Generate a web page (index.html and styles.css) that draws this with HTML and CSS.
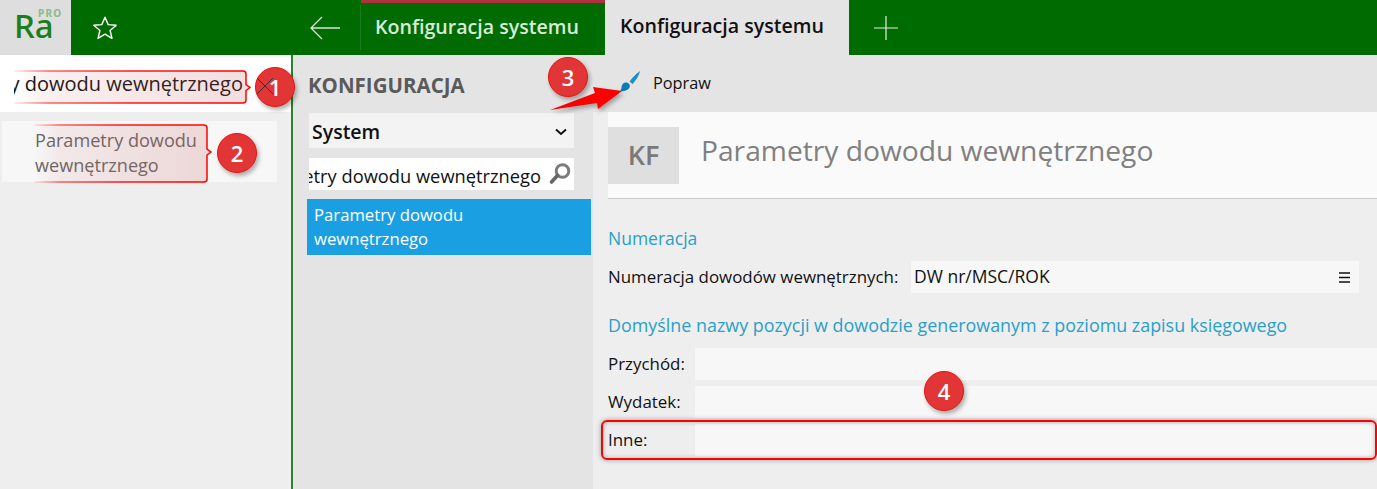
FILE: index.html
```html
<!DOCTYPE html>
<html lang="pl">
<head>
<meta charset="utf-8">
<title>Konfiguracja systemu</title>
<link rel="stylesheet" href="styles.css">
</head>
<body>
<header class="top">
  <div class="logo"><span class="logo-ra">Ra</span><span class="logo-pro">PRO</span></div>
  <div class="star-cell">
    <svg width="26" height="26" viewBox="0 0 26 26"><path d="M13 2.200l3.200 7.400 8 .7-6.100 5.200 1.900 7.800L13 19.100 6 23.300l1.900-7.800L1.800 10.300l8-.7z" fill="none" stroke="#fff" stroke-width="1.400" stroke-linejoin="round"/></svg>
  </div>
  <div class="back-cell">
    <svg width="32" height="26" viewBox="0 0 32 26"><path d="M31 13H2M13 2L2 13l11 11" fill="none" stroke="#d5e6d5" stroke-width="1.300"/></svg>
  </div>
  <div class="tab tab-inactive">Konfiguracja systemu</div>
  <div class="tab tab-active">Konfiguracja systemu</div>
  <div class="plus-cell">
    <svg width="26" height="26" viewBox="0 0 26 26"><path d="M13 1v24M1 13h24" stroke="#e4efe4" stroke-width="1.200"/></svg>
  </div>
</header>
<div class="main">
  <aside class="side">
    <div class="side-search"><div class="side-search-text"><span class="clip-text">Parametry dowodu wewnętrznego</span></div></div>
    <div class="side-item">Parametry dowodu<br>wewnętrznego</div>
  </aside>
  <nav class="mid">
    <h2 class="mid-title">KONFIGURACJA</h2>
    <div class="select"><span>System</span>
      <svg width="12" height="8" viewBox="0 0 12 8"><path d="M1 1.500l5 4.500 5-4.500" fill="none" stroke="#111" stroke-width="2"/></svg>
    </div>
    <div class="mid-search">
      <div class="mid-search-text"><span class="clip-text">Parametry dowodu wewnętrznego</span></div>
      <svg width="24" height="24" viewBox="0 0 24 24"><circle cx="14.500" cy="9" r="6.300" fill="none" stroke="#7b7b7b" stroke-width="3"/><path d="M9.500 13.500L3.500 20" stroke="#666" stroke-width="3.600" stroke-linecap="round"/></svg>
    </div>
    <div class="mid-item">Parametry dowodu<br>wewnętrznego</div>
  </nav>
  <section class="content">
    <div class="toolbar">
      <svg class="brush" width="22" height="24" viewBox="0 0 22 24"><path d="M21 1C18 3 13 8 10.500 11.500L13.500 14C16 11.500 20 6 21 1z" fill="#1a8fc4"/><path d="M8 12.500c-3-.5-5.500 1.500-5.500 5 0 1-.5 2.500-1.500 3.500 3 .5 8 0 9.500-3.500 1-2 .2-4-2.500-5z" fill="#0a7cb0"/></svg>
      <span class="toolbar-label">Popraw</span>
    </div>
    <div class="head">
      <div class="kf">KF</div>
      <h1 class="head-title">Parametry dowodu wewnętrznego</h1>
    </div>
    <div class="form">
      <h3 class="section first">Numeracja</h3>
      <div class="row row-num">
        <label class="lbl-auto">Numeracja dowodów wewnętrznych:</label>
        <div class="field field-num"><span class="field-value">DW nr/MSC/ROK</span>
          <svg width="11" height="11" viewBox="0 0 11 11"><path d="M0 1h11M0 5.500h11M0 10h11" stroke="#111" stroke-width="1.400"/></svg>
        </div>
      </div>
      <h3 class="section second">Domyślne nazwy pozycji w dowodzie generowanym z poziomu zapisu księgowego</h3>
      <div class="row"><label class="lbl">Przychód:</label><div class="field"></div></div>
      <div class="row"><label class="lbl">Wydatek:</label><div class="field"></div></div>
      <div class="row"><label class="lbl">Inne:</label><div class="field"></div></div>
    </div>
  </section>
</div>

<svg class="callout callout-1" width="240" height="38" viewBox="0 0 240 38">
  <defs>
    <linearGradient id="cf1" x1="0" x2="1" y1="0" y2="0"><stop offset="0" stop-color="#c86464" stop-opacity="0"/><stop offset=".15" stop-color="#c86464" stop-opacity=".1"/><stop offset="1" stop-color="#c86464" stop-opacity=".22"/></linearGradient>
    <linearGradient id="cs1" x1="0" x2="1" y1="0" y2="0"><stop offset="0" stop-color="#f00" stop-opacity=".08"/><stop offset=".15" stop-color="#f00" stop-opacity=".6"/><stop offset=".5" stop-color="#f00" stop-opacity=".9"/><stop offset="1" stop-color="#f00"/></linearGradient>
  </defs>
  <path d="M1 3H230q3 0 3 3V16.500l4 3-4 3V32q0 3-3 3H1" fill="url(#cf1)" stroke="url(#cs1)" stroke-width="1.500"/>
</svg>
<svg class="callout callout-2" width="185" height="60" viewBox="0 0 185 60">
  <path d="M1 1H171q3 0 3 3V25l4 3-4 3V55q0 3-3 3H1" fill="url(#cf1)" stroke="url(#cs1)" stroke-width="1.500"/>
</svg>
<svg class="callout arrow" width="75" height="36" viewBox="0 0 75 36">
  <path d="M1 30L46 13 44 7 73 11 49 29 48 23z" fill="#f00"/>
</svg>
<div class="callout outline"></div>
<div class="callout badge badge-1">1</div>
<div class="callout badge badge-2">2</div>
<div class="callout badge badge-3">3</div>
<div class="callout badge badge-4">4</div>
<svg class="callout closex" width="18" height="18" viewBox="0 0 18 18"><path d="M1 1l16 16M17 1L1 17" stroke="#333" stroke-width="1"/></svg>
</body>
</html>
```
FILE: styles.css
```css
* { box-sizing: border-box; }
html, body { margin: 0; height: 489px; overflow: hidden; }
body { position: relative; font-family: "Open Sans", "Noto Sans", sans-serif; color: #111; background: #eee; font-size: 16px; }

.top { display: flex; height: 55px; background: #006b00; }
.logo { position: relative; width: 71px; background: #dedede; }
.logo-ra { position: absolute; left: 14px; top: 2px; font: 500 33px/48px "Noto Sans", sans-serif; color: #1b7f1b; }
.logo-pro { position: absolute; left: 38px; top: 8px; font: 700 10px/11px "Noto Sans", sans-serif; color: #86bc86; letter-spacing: 1.200px; }
.star-cell { width: 70px; display: flex; align-items: center; padding-left: 21px; }
.back-cell { width: 220px; display: flex; align-items: center; justify-content: flex-end; padding-right: 19px; border-right: 1px solid #1c7b1c; margin: 5px 0; }
.tab { width: 244px; display: flex; align-items: center; padding-left: 14px; font-size: 19.600px; font-weight: 600; }
.tab-inactive { color: #d8ecd8; border-top: 3px solid #b03040; padding-bottom: 6px; }
.tab-active { padding: 0 0 4px 15px; background: #e4e4e4; color: #111; }
.plus-cell { display: flex; align-items: center; padding-left: 24px; }

.main { display: flex; height: 434px; }
.side { width: 293px; background: #eee; border-right: 2px solid #2a842a; }
.side-search { height: 57px; padding: 0 48px 0 14px; background: #fff; display: flex; align-items: center; font-size: 20px; }
.side-search-text { flex: 1; min-width: 0; overflow: hidden; display: flex; justify-content: flex-end; }
.clip-text { white-space: nowrap; flex: none; }
.side-item { margin: 9px 14px 0 2px; height: 61px; padding: 7px 0 0 33px; background: #f7f7f7; font-size: 18.100px; line-height: 25px; color: #666; }

.mid { width: 300px; background: #e4e4e4; padding: 0 2px 0 14px; }
.mid-title { margin: 0; height: 58px; padding: 17px 0 0 1px; font-size: 20.500px; line-height: 26px; font-weight: 700; color: #5a5a5a; }
.select { margin-left: 2px; width: 265px; height: 35px; padding: 2px 7px 0 3px; background: #f3f3f3; display: flex; align-items: center; justify-content: space-between; font-size: 19.500px; font-weight: 600; color: #111; }
.mid-search { margin: 10px 0 0 2px; width: 265px; height: 32px; padding: 0 2px 0 0; background: #fff; display: flex; align-items: center; font-size: 18.300px; }
.mid-search-text { flex: 1; min-width: 0; overflow: hidden; display: flex; justify-content: flex-end; padding: 2px 7px 0 0; }
.mid-item { margin-top: 9px; height: 56px; padding: 4px 0 0 7px; background: #1aa0e2; color: #fff; font-size: 16.700px; line-height: 24px; }

.content { flex: 1; min-width: 0; background: #eee; }
.toolbar { height: 57px; background: #e4e4e4; display: flex; align-items: center; gap: 12px; padding: 0 0 3px 26px; font-size: 16.300px; }
.toolbar-label { margin-top: 2px; }
.head { margin-left: 15px; height: 87px; background: #fafafa; border-bottom: 1px solid #ccc; display: flex; align-items: center; gap: 22px; }
.kf { width: 71px; height: 57px; padding-bottom: 2px; background: #dfdfdf; display: flex; align-items: center; justify-content: center; font-size: 27px; font-weight: 600; color: #7a7a7a; }
.head-title { margin: 0 0 10px; font-size: 28.200px; font-weight: 400; color: #808080; }
.form { padding-left: 15px; }
.section { margin: 0; font-weight: 400; line-height: 24px; color: #2a9fc8; }
.section.first { padding-top: 27px; font-size: 17.500px; }
.section.second { padding-top: 11px; margin-bottom: 11px; font-size: 17.900px; }
.row { display: flex; align-items: center; height: 32px; margin-bottom: 6px; font-size: 16.900px; }
.row-num { margin: 11px 0 9px; }
.lbl { width: 87px; flex: none; padding-bottom: 2px; }
.lbl-auto { width: 303px; flex: none; padding-bottom: 2px; }
.field { flex: 1; height: 32px; background: #f7f7f7; }
.field-num { flex: none; width: 448px; display: flex; align-items: center; justify-content: space-between; padding: 0 9px 0 3px; font-size: 17.500px; }
.field-value { margin-bottom: 2px; }

.callout { position: absolute; }
.callout-1 { left: 13px; top: 68px; }
.callout-2 { left: 33px; top: 124px; }
.arrow { left: 549px; top: 80px; filter: drop-shadow(2px 3px 2px rgba(0,0,0,.3)); }
.outline { left: 601px; top: 420px; width: 776px; height: 40px; border: 2px solid #f00; border-radius: 6px; box-shadow: 0 0 5px rgba(0,0,0,.35), inset 0 0 5px rgba(0,0,0,.25); }
.badge { width: 40px; height: 40px; border-radius: 50%; background: #e23535; border: 1.500px solid #f01010; color: #fff; display: flex; align-items: center; justify-content: center; font-size: 22px; font-weight: 600; box-shadow: 2px 3px 4px rgba(0,0,0,.3); }
.badge-1 { left: 255px; top: 67px; }
.badge-2 { left: 217px; top: 133px; }
.badge-3 { left: 548px; top: 57px; }
.badge-4 { left: 924px; top: 371px; }
.closex { left: 256px; top: 77px; }
```
